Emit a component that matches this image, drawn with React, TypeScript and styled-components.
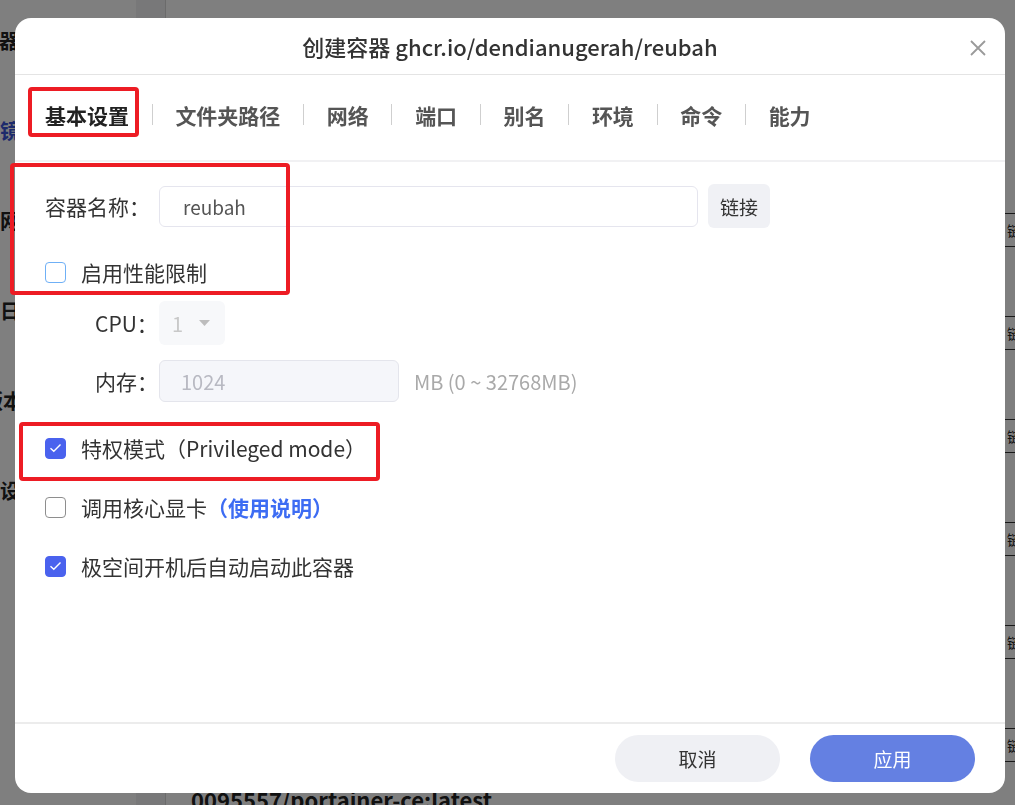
import React from 'react';
import styled, { createGlobalStyle } from 'styled-components';

const GlobalStyle = createGlobalStyle`
    html, body {
        margin: 0;
        padding: 0;
    }
    body {
        width: 1015px;
        height: 805px;
        overflow: hidden;
        font-family: "Noto Sans CJK SC", "Noto Sans", sans-serif;
        background: #f0f1f3;
    }
    #root {
        height: 100%;
    }
`;

/* ---------- page behind the dialog ---------- */

const SPage = styled.div`
    display: flex;
    height: 805px;
`;

const SSidebar = styled.div`
    width: 136px;
    flex-shrink: 0;
    background: #ffffff;
    display: flex;
    flex-direction: column;
    margin-top: -5px;
    overflow: hidden;
`;

const SSideItem = styled.div<{ $active?: boolean; $shift?: number }>`
    height: 90px;
    display: flex;
    align-items: center;
    font-size: 20px;
    font-weight: 700;
    white-space: nowrap;
    color: ${({ $active }) => ($active ? '#3a55d8' : '#222')};
    margin-left: ${({ $shift }) => ($shift ? `${-$shift}px` : '0')};
`;

const SMain = styled.div`
    flex: 1;
    padding-left: 29px;
    display: flex;
`;

const SPanel = styled.div`
    flex: 1;
    background: #ffffff;
    border-left: 1px solid #d6d6d6;
    padding-top: 166px;
    padding-left: 25px;
    overflow: hidden;
`;

const SBgRow = styled.div`
    height: 103px;
    display: flex;
    flex-direction: column;
`;

const SBgTitle = styled.div`
    font-size: 22px;
    font-weight: 700;
    color: #222;
    line-height: 30px;
    white-space: nowrap;
`;

const SBgButton = styled.div`
    margin-top: 17px;
    margin-left: 813px;
    height: 32px;
    width: 60px;
    border: 1px solid #333;
    border-right: none;
    display: flex;
    align-items: center;
    padding-left: 2px;
    font-size: 14px;
    color: #222;
`;

const SOverlay = styled.div`
    position: fixed;
    inset: 0;
    background: rgba(0, 0, 0, 0.5);
`;

/* ---------- dialog ---------- */

const SModal = styled.div`
    position: fixed;
    top: 18px;
    left: 15px;
    width: 990px;
    height: 775px;
    background: #ffffff;
    border-radius: 16px;
    display: flex;
    flex-direction: column;
    overflow: hidden;
`;

const SHeader = styled.div`
    height: 56px;
    flex-shrink: 0;
    display: flex;
    align-items: center;
    justify-content: center;
    border-bottom: 1px solid #e4e4e4;
    position: relative;
`;

const STitle = styled.div`
    font-size: 22px;
    font-weight: 500;
    color: #333;
`;

const SClose = styled.button`
    position: absolute;
    right: 17px;
    top: 20px;
    width: 20px;
    height: 20px;
    padding: 0;
    border: none;
    background: transparent;
    cursor: pointer;
    display: flex;
    align-items: center;
    justify-content: center;
`;

const STabs = styled.div`
    height: 87px;
    box-sizing: border-box;
    padding-bottom: 6px;
    flex-shrink: 0;
    display: flex;
    align-items: center;
    padding-left: 30px;
    border-bottom: 2px solid #f1f1f3;
`;

const STab = styled.div<{ $active?: boolean }>`
    font-size: 21px;
    font-weight: 700;
    color: ${({ $active }) => ($active ? '#222' : '#555')};
    padding: 0 22.7px;
    cursor: pointer;

    &:first-child {
        padding-left: 0;
    }
`;

const SDivider = styled.span`
    width: 1px;
    height: 21px;
    background: #cfcfcf;
`;

const SBody = styled.div`
    flex: 1;
    padding: 22px 30px 0;
    display: flex;
    flex-direction: column;
`;

const SRow = styled.div<{ $mt?: number; $indent?: number }>`
    display: flex;
    align-items: center;
    min-height: 30px;
    margin-top: ${({ $mt }) => $mt || 0}px;
    padding-left: ${({ $indent }) => $indent || 0}px;
`;

const SLabel = styled.div<{ $w: number }>`
    width: ${({ $w }) => $w}px;
    flex-shrink: 0;
    font-size: 21px;
    line-height: 30px;
    color: #333;
`;

const SInput = styled.input`
    width: 539px;
    height: 41px;
    box-sizing: border-box;
    border: 1px solid #e5e5ee;
    border-radius: 6px;
    padding: 0 23px;
    font-family: inherit;
    font-size: 19px;
    color: #555;
    outline: none;
`;

const SGhostButton = styled.button`
    margin-left: 10px;
    width: 62px;
    height: 44px;
    border: none;
    border-radius: 6px;
    background: #f0f1f5;
    font-family: inherit;
    font-size: 19px;
    color: #333;
    cursor: pointer;
`;

const SSelect = styled.div`
    width: 66px;
    height: 44px;
    box-sizing: border-box;
    border-radius: 6px;
    background: #f7f8fa;
    display: flex;
    align-items: center;
    padding-left: 13px;
    gap: 16px;
    font-size: 20px;
    color: #c8c8c8;
`;

const SDisabledInput = styled.input`
    width: 240px;
    height: 42px;
    box-sizing: border-box;
    border: 1px solid #e4e5ec;
    border-radius: 6px;
    background: #f5f6fa;
    padding: 0 21px;
    font-family: inherit;
    font-size: 20px;
    color: #b8b9c2;
    outline: none;
`;

const SHint = styled.span`
    margin-left: 15px;
    font-size: 20px;
    color: #a9a9a9;
`;

const SCheckBox = styled.span<{ $checked?: boolean; $focus?: boolean }>`
    width: 21px;
    height: 21px;
    box-sizing: border-box;
    border-radius: 4px;
    flex-shrink: 0;
    display: flex;
    align-items: center;
    justify-content: center;
    background: ${({ $checked }) => ($checked ? '#4a62ee' : '#ffffff')};
    border: 1px solid ${({ $checked, $focus }) => ($checked ? '#4a62ee' : $focus ? '#6fb0f6' : '#8e8e8e')};
`;

const SCheckText = styled.span`
    margin-left: 15px;
    font-size: 21px;
    line-height: 30px;
    color: #333;
`;

const SHelpLink = styled.a`
    font-weight: 700;
    color: #3d6cf3;
    text-decoration: none;
    cursor: pointer;
`;

const SFooter = styled.div`
    height: 69px;
    flex-shrink: 0;
    border-top: 2px solid #ececec;
    display: flex;
    align-items: center;
    justify-content: flex-end;
    gap: 30px;
    padding-right: 30px;
`;

const SFooterButton = styled.button<{ $primary?: boolean }>`
    width: 165px;
    height: 47px;
    border: none;
    border-radius: 24px;
    font-family: inherit;
    font-size: 19px;
    cursor: pointer;
    background: ${({ $primary }) => ($primary ? '#6480e2' : '#eff0f4')};
    color: ${({ $primary }) => ($primary ? '#ffffff' : '#333')};
`;

/* ---------- red annotation frames ---------- */

const SMark = styled.div`
    position: fixed;
    box-sizing: border-box;
    border: 4px solid #ed1c24;
    border-radius: 4px;
    pointer-events: none;
`;

const Check = ({ checked, focus }: { checked?: boolean; focus?: boolean }) => (
    <SCheckBox $checked={checked} $focus={focus}>
        {checked && (
            <svg width="13" height="10" viewBox="0 0 13 10">
                <path d="M1.5 5.2 L4.8 8.3 L11.5 1.6" fill="none" stroke="#fff" strokeWidth="1.4" />
            </svg>
        )}
    </SCheckBox>
);

const tabs = ['基本设置', '文件夹路径', '网络', '端口', '别名', '环境', '命令', '能力'];

const App = () => {
    return (
        <>
            <GlobalStyle />
            <SPage>
                <SSidebar>
                    <SSideItem $shift={21}>容器</SSideItem>
                    <SSideItem $active>镜像</SSideItem>
                    <SSideItem>网络</SSideItem>
                    <SSideItem>日志</SSideItem>
                    <SSideItem $shift={17}>版本</SSideItem>
                    <SSideItem>设置</SSideItem>
                </SSidebar>
                <SMain>
                    <SPanel>
                        {[0, 1, 2, 3, 4, 5].map((i) => (
                            <SBgRow key={i}>
                                <SBgTitle>image</SBgTitle>
                                <SBgButton>链接</SBgButton>
                            </SBgRow>
                        ))}
                        <SBgRow>
                            <SBgTitle>0095557/portainer-ce:latest</SBgTitle>
                        </SBgRow>
                    </SPanel>
                </SMain>
            </SPage>

            <SOverlay />

            <SModal>
                <SHeader>
                    <STitle>创建容器 ghcr.io/dendianugerah/reubah</STitle>
                    <SClose>
                        <svg width="18" height="18" viewBox="0 0 18 18">
                            <path d="M2 2 L16 16 M16 2 L2 16" stroke="#9a9a9a" strokeWidth="1.8" />
                        </svg>
                    </SClose>
                </SHeader>

                <STabs>
                    {tabs.map((t, i) => (
                        <React.Fragment key={t}>
                            {i > 0 && <SDivider />}
                            <STab $active={i === 0}>{t}</STab>
                        </React.Fragment>
                    ))}
                </STabs>

                <SBody>
                    <SRow>
                        <SLabel $w={114}>容器名称：</SLabel>
                        <SInput defaultValue="reubah" />
                        <SGhostButton>链接</SGhostButton>
                    </SRow>

                    <SRow $mt={29}>
                        <Check focus />
                        <SCheckText>启用性能限制</SCheckText>
                    </SRow>

                    <SRow $mt={14} $indent={50}>
                        <SLabel $w={64}>CPU：</SLabel>
                        <SSelect>
                            <span>1</span>
                            <svg width="11" height="6" viewBox="0 0 11 6">
                                <path d="M0 0 H11 L5.5 6 Z" fill="#bdbdbd" />
                            </svg>
                        </SSelect>
                    </SRow>

                    <SRow $mt={15} $indent={50}>
                        <SLabel $w={64}>内存：</SLabel>
                        <SDisabledInput defaultValue="1024" disabled />
                        <SHint>MB (0 ~ 32768MB)</SHint>
                    </SRow>

                    <SRow $mt={31}>
                        <Check checked />
                        <SCheckText>特权模式（Privileged mode）</SCheckText>
                    </SRow>

                    <SRow $mt={29}>
                        <Check />
                        <SCheckText>
                            调用核心显卡<SHelpLink>（使用说明）</SHelpLink>
                        </SCheckText>
                    </SRow>

                    <SRow $mt={29}>
                        <Check checked />
                        <SCheckText>极空间开机后自动启动此容器</SCheckText>
                    </SRow>
                </SBody>

                <SFooter>
                    <SFooterButton>取消</SFooterButton>
                    <SFooterButton $primary>应用</SFooterButton>
                </SFooter>
            </SModal>

            <SMark style={{ left: 28, top: 87, width: 111, height: 50 }} />
            <SMark style={{ left: 10, top: 163, width: 280, height: 132 }} />
            <SMark style={{ left: 19, top: 422, width: 361, height: 59 }} />
        </>
    );
};

export default App;
